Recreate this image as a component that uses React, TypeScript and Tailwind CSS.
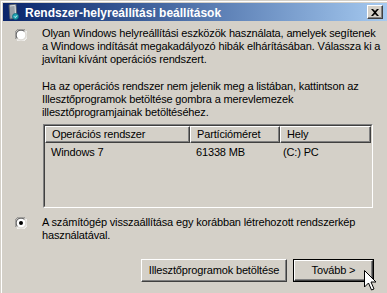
const Radio = ({ checked }: { checked?: boolean }) => (
  <svg width="12" height="12" viewBox="0 0 12 12" className="shrink-0">
    <circle cx="6" cy="6" r="5.5" fill="#ffffff" />
    <path d="M1.5 10.5 A6 6 0 0 1 10.5 1.5" stroke="#808080" strokeWidth="1" fill="none" />
    <path d="M10.5 1.5 A6 6 0 0 1 1.5 10.5" stroke="#ffffff" strokeWidth="1" fill="none" />
    <path d="M2.5 9.5 A4.8 4.8 0 0 1 9.5 2.5" stroke="#404040" strokeWidth="1" fill="none" />
    <path d="M9.5 2.5 A4.8 4.8 0 0 1 2.5 9.5" stroke="#d4d0c8" strokeWidth="1" fill="none" />
    {checked && <circle cx="6" cy="6" r="2" fill="#000000" />}
  </svg>
);

const Button = ({ label, primary, width }: { label: string; primary?: boolean; width: string }) => (
  <div className={`${width} h-[23px] ${primary ? "border border-black" : ""}`}>
    <div className="h-full border border-t-white border-l-white border-r-[#404040] border-b-[#404040] shadow-[inset_-1px_-1px_0_#808080] flex items-center justify-center">
      {label}
    </div>
  </div>
);

const HeaderCell = ({ label, width }: { label: string; width: string }) => (
  <div className={`${width} h-[17px] flex items-center pl-[6px] border border-t-white border-l-white border-r-[#404040] border-b-[#404040] shadow-[inset_-1px_-1px_0_#808080]`}>
    {label}
  </div>
);

const App = () => {
  return (
    <div className="w-[387px] h-[293px] overflow-hidden relative bg-[#d4d0c8] font-['Liberation_Sans',Arial,sans-serif] text-[11px] tracking-[-0.15px] text-black">
      <div className="h-full border-l border-t border-[#d4d0c8]">
        <div className="h-full border-l border-t border-white pl-[1px] pt-[1px]">
          {/* Title bar */}
          <div className="h-[18px] flex items-center bg-linear-to-r from-[#0a246a] to-[#a6caf0] pl-[3px] pr-[4px]">
            <svg width="14" height="16" viewBox="0 0 14 16" className="mr-[5px]">
              <path d="M3 1 L10 0 L11 14 L4 15 Z" fill="#9aa0a8" stroke="#5a6068" strokeWidth="0.8" />
              <path d="M4 2 L9 1.4 L9.6 12" stroke="#d8dce0" strokeWidth="1" fill="none" />
              <circle cx="9.5" cy="12.5" r="3" fill="#1fa3b5" stroke="#0b6c7a" strokeWidth="0.8" />
              <path d="M8.3 12.5 L9.3 13.5 L11 11.5" stroke="#ffffff" strokeWidth="0.9" fill="none" />
            </svg>
            <span className="text-white font-bold text-[12px] tracking-normal leading-none whitespace-nowrap mt-[1px]">
              Rendszer-helyreállítási beállítások
            </span>
            <div className="ml-auto w-[16px] h-[14px] bg-[#d4d0c8] border border-t-white border-l-white border-r-[#404040] border-b-[#404040] shadow-[inset_-1px_-1px_0_#808080] flex items-center justify-center">
              <svg width="8" height="7" viewBox="0 0 8 7">
                <path d="M0 0 L2 0 L4 2 L6 0 L8 0 L5 3.5 L8 7 L6 7 L4 5 L2 7 L0 7 L3 3.5 Z" fill="#000000" />
              </svg>
            </div>
          </div>

          {/* Content */}
          <div className="pl-[12px] pr-[12px] pt-[6px] leading-[13px]">
            <div className="flex items-start">
              <div className="mt-[2px] mr-[15px]">
                <Radio />
              </div>
              <div className="whitespace-nowrap">
                <p>
                  Olyan Windows helyreállítási eszközök használata, amelyek segítenek
                  <br />a Windows indítását megakadályozó hibák elhárításában. Válassza ki a
                  <br />javítani kívánt operációs rendszert.
                </p>
                <p className="mt-[14px]">
                  Ha az operációs rendszer nem jelenik meg a listában, kattintson az
                  <br />Illesztőprogramok betöltése gombra a merevlemezek
                  <br />illesztőprogramjainak betöltéséhez.
                </p>

                {/* List */}
                <div className="mt-[5px] ml-[1px] w-[330px] h-[84px] border border-t-[#808080] border-l-[#808080] border-r-white border-b-white">
                  <div className="h-full border border-t-[#404040] border-l-[#404040] border-r-[#d4d0c8] border-b-[#d4d0c8]">
                    <div className="flex">
                      <HeaderCell label="Operációs rendszer" width="w-[145px]" />
                      <HeaderCell label="Partícióméret" width="w-[90px]" />
                      <HeaderCell label="Hely" width="w-[91px]" />
                    </div>
                    <div className="flex mt-[3px]">
                      <div className="w-[145px] pl-[6px]">Windows 7</div>
                      <div className="w-[90px] pl-[6px]">61338 MB</div>
                      <div className="w-[91px] pl-[3px]">(C:) PC</div>
                    </div>
                  </div>
                </div>
              </div>
            </div>

            <div className="flex items-start mt-[8px]">
              <div className="mt-[1px] mr-[15px]">
                <Radio checked />
              </div>
              <p className="whitespace-nowrap">
                A számítógép visszaállítása egy korábban létrehozott rendszerkép
                <br />használatával.
              </p>
            </div>

            <div className="flex justify-end gap-[6px] mt-[17px] pr-[1px]">
              <Button label="Illesztőprogramok betöltése" width="w-[146px]" />
              <Button label="Tovább >" width="w-[81px]" primary />
            </div>
          </div>
        </div>
      </div>

      {/* Mouse pointer */}
      <svg width="13" height="21" viewBox="0 0 13 21" className="absolute left-[364px] top-[270px]">
        <path d="M0.5 0.5 L0.5 17 L4.5 13 L7.5 20 L10 19 L7 12 L12 12 Z" fill="#ffffff" stroke="#000000" strokeWidth="1" strokeLinejoin="miter" />
      </svg>
    </div>
  );
};

export default App;
